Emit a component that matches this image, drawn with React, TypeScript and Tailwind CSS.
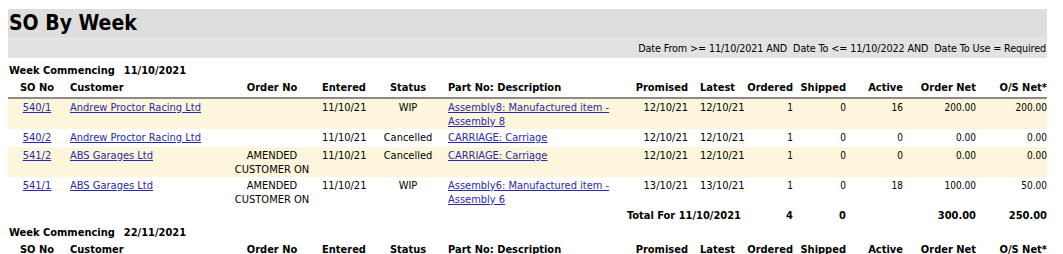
import React from 'react';

type Line = {
  so: string;
  customer: string;
  orderNo: string;
  entered: string;
  status: string;
  part: string;
  promised: string;
  latest: string;
  ordered: number;
  shipped: number;
  active: number;
  orderNet: string;
  osNet: string;
};

const firstWeek: Line[] = [
  { so: '540/1', customer: 'Andrew Proctor Racing Ltd', orderNo: '', entered: '11/10/21', status: 'WIP', part: 'Assembly8: Manufactured item - Assembly 8', promised: '12/10/21', latest: '12/10/21', ordered: 1, shipped: 0, active: 16, orderNet: '200.00', osNet: '200.00' },
  { so: '540/2', customer: 'Andrew Proctor Racing Ltd', orderNo: '', entered: '11/10/21', status: 'Cancelled', part: 'CARRIAGE: Carriage', promised: '12/10/21', latest: '12/10/21', ordered: 1, shipped: 0, active: 0, orderNet: '0.00', osNet: '0.00' },
  { so: '541/2', customer: 'ABS Garages Ltd', orderNo: 'AMENDED CUSTOMER ON', entered: '11/10/21', status: 'Cancelled', part: 'CARRIAGE: Carriage', promised: '12/10/21', latest: '12/10/21', ordered: 1, shipped: 0, active: 0, orderNet: '0.00', osNet: '0.00' },
  { so: '541/1', customer: 'ABS Garages Ltd', orderNo: 'AMENDED CUSTOMER ON', entered: '11/10/21', status: 'WIP', part: 'Assembly6: Manufactured item - Assembly 6', promised: '13/10/21', latest: '13/10/21', ordered: 1, shipped: 0, active: 18, orderNet: '100.00', osNet: '50.00' },
];

const linkCls = 'text-[#2a2aa8] underline underline-offset-1';
const numCls = 'text-right text-[10px]';

const Cols = () => (
  <colgroup>
    <col className="w-[58px]" />
    <col className="w-[166px]" />
    <col className="w-[80px]" />
    <col className="w-[68px]" />
    <col className="w-[56px]" />
    <col className="w-[192px]" />
    <col className="w-[60px]" />
    <col className="w-[57px]" />
    <col className="w-[48px]" />
    <col className="w-[53px]" />
    <col className="w-[57px]" />
    <col className="w-[73px]" />
    <col className="w-[71px]" />
  </colgroup>
);

const HeaderRow = () => (
  <thead>
    <tr className="font-bold [&>th]:pt-[3px] [&>th]:pb-[2px] [&>th]:font-bold border-b-2 border-[#8a8a8a]">
      <th className="text-center">SO No</th>
      <th className="text-left pl-[4px]">Customer</th>
      <th className="text-center">Order No</th>
      <th className="text-left pl-[10px]">Entered</th>
      <th className="text-center">Status</th>
      <th className="text-left pl-[12px]">Part No: Description</th>
      <th className="text-right">Promised</th>
      <th className="text-left pl-[12px]">Latest</th>
      <th className="text-right">Ordered</th>
      <th className="text-right">Shipped</th>
      <th className="text-right">Active</th>
      <th className="text-right">Order Net</th>
      <th className="text-right">O/S Net*</th>
    </tr>
  </thead>
);

const WeekLabel = ({ date, className }: { date: string; className: string }) => (
  <div className={`flex gap-[9px] pl-[1px] font-bold leading-[14px] ${className}`}>
    <span>Week Commencing</span>
    <span>{date}</span>
  </div>
);

export default function App() {
  return (
    <div className="min-h-screen bg-white text-[11px] leading-[14px] text-black font-['DejaVu_Sans_Condensed','DejaVu_Sans',sans-serif]">
      <div className="ml-[8px] w-[1039px] pt-[9px]">
        {/* report header */}
        <div className="h-[29px] bg-[#dedede] flex items-center pl-[1px]">
          <h1 className="text-[21px] font-bold leading-none">SO By Week</h1>
        </div>
        <div className="h-[20px] bg-[#e2e2e2] border-t border-[#e9e9e9] flex items-center justify-end pr-[1px]">
          <span className="text-[10.7px] tracking-[-0.1px]">Date From &gt;= 11/10/2021 AND&nbsp; Date To &lt;= 11/10/2022 AND&nbsp; Date To Use = Required</span>
        </div>

        <WeekLabel date="11/10/2021" className="mt-[6px]" />
        <table className="table-fixed w-[1039px] border-collapse">
          <Cols />
          <HeaderRow />
          <tbody>
            {firstWeek.map((r, i) => (
              <tr key={r.so} className={`h-[18px] align-top [&>td]:pt-[2px] ${i % 2 === 0 ? 'bg-[#fdf5dc]' : 'bg-white'}`}>
                <td className="text-center">
                  <a href="#" className={linkCls}>{r.so}</a>
                </td>
                <td className="pl-[4px]">
                  <a href="#" className={linkCls}>{r.customer}</a>
                </td>
                <td className="text-center">{r.orderNo}</td>
                <td className="pl-[10px]">{r.entered}</td>
                <td className="text-center">{r.status}</td>
                <td className="pl-[12px]">
                  <a href="#" className={linkCls}>{r.part}</a>
                </td>
                <td className="text-right">{r.promised}</td>
                <td className="pl-[12px]">{r.latest}</td>
                <td className={numCls}>{r.ordered}</td>
                <td className={numCls}>{r.shipped}</td>
                <td className={numCls}>{r.active}</td>
                <td className={numCls}>{r.orderNet}</td>
                <td className={numCls}>{r.osNet}</td>
              </tr>
            ))}
            <tr className="font-bold align-top [&>td]:pt-[2px] [&>td]:pb-[3px]">
              <td colSpan={8} className="text-right pr-[4px]">Total For 11/10/2021</td>
              <td className="text-right">4</td>
              <td className="text-right">0</td>
              <td></td>
              <td className="text-right">300.00</td>
              <td className="text-right">250.00</td>
            </tr>
          </tbody>
        </table>

        <WeekLabel date="22/11/2021" className="" />
        <table className="table-fixed w-[1039px] border-collapse">
          <Cols />
          <HeaderRow />
        </table>
      </div>
    </div>
  );
}
